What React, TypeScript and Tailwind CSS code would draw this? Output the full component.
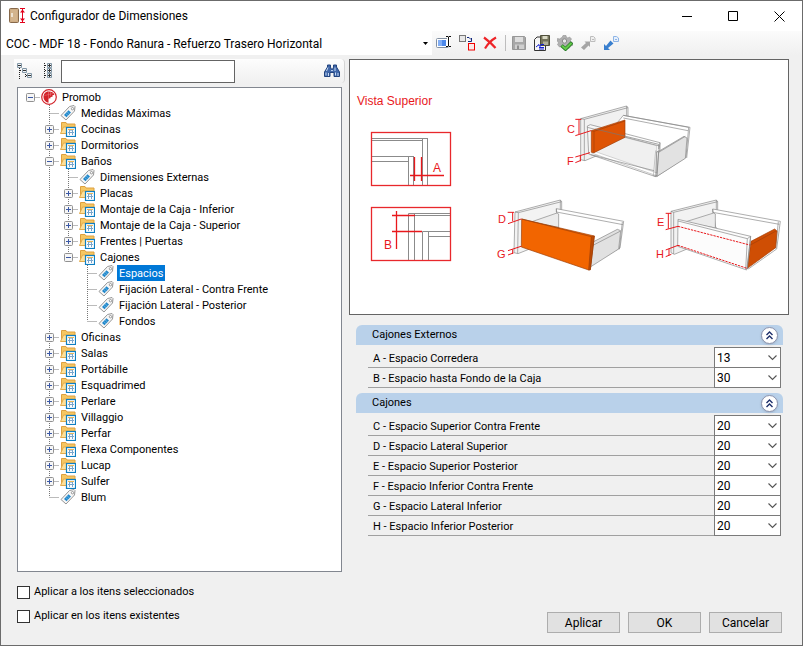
import React from "react";
import clsx from "clsx";

type TreeItem = {
  label: string;
  icon?: "root" | "folder" | "tag";
  selected?: boolean;
  closed?: boolean;
  items?: TreeItem[];
};

const folder = (label: string, items?: TreeItem[]): TreeItem => ({
  label,
  icon: "folder",
  closed: !items,
  items,
});
const tag = (label: string, selected = false): TreeItem => ({
  label,
  icon: "tag",
  selected,
});

const tree: TreeItem = {
  label: "Promob",
  icon: "root",
  items: [
    tag("Medidas Máximas"),
    folder("Cocinas"),
    folder("Dormitorios"),
    folder("Baños", [
      tag("Dimensiones Externas"),
      folder("Placas"),
      folder("Montaje de la Caja - Inferior"),
      folder("Montaje de la Caja - Superior"),
      folder("Frentes | Puertas"),
      folder("Cajones", [
        tag("Espacios", true),
        tag("Fijación Lateral - Contra Frente"),
        tag("Fijación Lateral - Posterior"),
        tag("Fondos"),
      ]),
    ]),
    folder("Oficinas"),
    folder("Salas"),
    folder("Portábille"),
    folder("Esquadrimed"),
    folder("Perlare"),
    folder("Villaggio"),
    folder("Perfar"),
    folder("Flexa Componentes"),
    folder("Lucap"),
    folder("Sulfer"),
    tag("Blum"),
  ],
};

const groups = [
  {
    title: "Cajones Externos",
    rows: [
      ["A - Espacio Corredera", "13"],
      ["B - Espacio hasta Fondo de la Caja", "30"],
    ],
  },
  {
    title: "Cajones",
    rows: [
      ["C - Espacio Superior Contra Frente", "20"],
      ["D - Espacio Lateral Superior", "20"],
      ["E - Espacio Superior Posterior", "20"],
      ["F - Espacio Inferior Contra Frente", "20"],
      ["G - Espacio Lateral Inferior", "20"],
      ["H - Espacio Inferior Posterior", "20"],
    ],
  },
];

/* ---------- Icons ---------- */

function Icon({ children }: { children: React.ReactNode }) {
  return (
    <svg className="size-4 shrink-0" viewBox="0 0 16 16" fill="none" aria-hidden="true">
      {children}
    </svg>
  );
}

function AppIcon() {
  return (
    <Icon>
      <rect x=".5" y=".5" width="9" height="14" rx="1" fill="#c9a67c" stroke="#86684a" />
      <path d="M1.5 1.5h7v12h-7z" fill="#d3b48d" />
      <path d="M3 5v4" stroke="#f7f3ea" strokeWidth="1.5" />
      <path d="M11 .5h5M11 14.5h5M13.5 1v13" stroke="#e2001a" />
      <path d="M11 4.5l2.5-3 2.5 3zM11 10.5l2.5 3 2.5-3z" fill="#e2001a" />
    </Icon>
  );
}

function RootIcon() {
  return (
    <Icon>
      <circle cx="8" cy="8" r="7.3" fill="#fff" stroke="#d2232a" strokeWidth="1.2" />
      <path
        d="M8 2.500C5 2 2.500 4.500 2.500 8c0 3 2.500 5.500 5 5.800L7.500 9.500l2-.2V8l2-.3V6.300l2-.5C12.500 3.500 10.500 2.500 8 2.500z"
        fill="#d2232a"
      />
      <path d="M7.500 3v6M3.500 6.500L12 4.500M9.500 3v4" stroke="#ee8085" strokeWidth=".5" />
    </Icon>
  );
}

function FolderIcon() {
  return (
    <Icon>
      <path d="M1.500 11.500V1.500h4.500l1 1.500h8v8.500z" fill="#f6c762" stroke="#dda040" />
      <path d="M.5 12.500L3.500 6H15l-1 6.500z" fill="#fee09a" stroke="#e2ab4c" />
      <rect x="6.500" y="6.500" width="9" height="9" fill="#fff" stroke="#0f7fc2" strokeWidth="1.200" />
      <path d="M8 11.500h6M9.500 8v6M12.500 8v6" stroke="#7aa6cc" />
      <path d="M8 8.500h6" stroke="#e9b75a" />
      <path d="M10 9.500h2" stroke="#a8c8e4" />
    </Icon>
  );
}

function TagIcon() {
  return (
    <Icon>
      <path d="M9.500 1.500L14 .5l1 1-.5 4.500L6 15 1 10.500z" fill="#f6f6f6" stroke="#969696" />
      <circle cx="12.500" cy="3.700" r="1.200" fill="#fff" stroke="#777" strokeWidth=".7" />
      <path d="M8.500 5.300l2.500 2.200-4.500 4.700L4 10z" fill="#2187ca" />
      <path d="M7 6.800l2.500 2.200M5.500 8.400L8 10.600" stroke="#8ccbf0" strokeWidth=".6" />
    </Icon>
  );
}

function CollapseIcon() {
  return (
    <Icon>
      <path d="M2.500 5v11M3 7.500h3M8.500 9v6M9 12.500h2" stroke="#222" strokeDasharray="1 1" />
      <path d="M.5 .5h4v4h-4zM5.500 5.500h4v4h-4zM10.500 10.500h4v4h-4z" fill="#eef2f5" stroke="#8296a5" />
      <path d="M1 2.500h3M6 7.500h3M11 12.500h3" stroke="#333" />
    </Icon>
  );
}

function ExpandIcon() {
  return (
    <Icon>
      <path d="M4.500 0v16M5 2.500h3M5 7.500h3M5 12.500h3" stroke="#222" strokeDasharray="1 1" />
      <path d="M7.500 .5h4v4h-4zM7.500 5.500h4v4h-4zM7.500 10.500h4v4h-4z" fill="#eef2f5" stroke="#8296a5" />
      <path d="M8 2.500h3M9.500 1v3M8 7.500h3M9.500 6v3M8 12.500h3M9.500 11v3" stroke="#333" />
    </Icon>
  );
}

function BinocularsIcon() {
  return (
    <Icon>
      <path d="M3.500 2h3v2L7 6h2l.5-2V2h3v2l3 5v4.500h-5.500V9.500H6v4H.5V9l3-5z" fill="#3f66a8" stroke="#21437e" />
      <path d="M2 9.500v3M4 4.500L2.500 8M11.500 9.500v3M11 4.500V8M4.500 10v3M14 10v3" stroke="#c6daf5" />
      <path d="M7 7.500h2" stroke="#b5cbea" />
    </Icon>
  );
}

function RenameIcon() {
  return (
    <Icon>
      <rect x=".5" y="3.500" width="12" height="9" rx="1" fill="#fff" stroke="#8290a3" />
      <path d="M2 5h8v6H2z" fill="#4c88ea" />
      <path d="M2 5h4v6H2z" fill="#82aef4" />
      <path d="M12.500 2v10" stroke="#fff" strokeWidth="3" />
      <path d="M10 1.500h2l.5.5.5-.5h2M12.500 2v9M10 11.500h2l.5-.5.5.5h2" stroke="#111" />
    </Icon>
  );
}

function ReplaceIcon() {
  return (
    <Icon>
      <rect x=".5" y=".5" width="6" height="6" fill="#e8e8e8" stroke="#777" />
      <path d="M8 2.500h2l2 2M12.500 3v3.500H9" stroke="#12277c" />
      <rect x="9.500" y="8.500" width="6" height="6.500" fill="#fbe9e9" stroke="#f00000" />
    </Icon>
  );
}

function DeleteIcon() {
  return (
    <Icon>
      <path d="M2 2.500c4 3 8 6.500 11.500 10.500M14 2.500C9.500 5 6 8.500 3 13.500" stroke="#ee2428" strokeWidth="2.200" />
    </Icon>
  );
}

function SaveIcon() {
  return (
    <Icon>
      <path d="M1.500 1.500h12l1 1v12h-13z" fill="#a8a8a8" stroke="#979797" />
      <path d="M4 2h8v5H4z" fill="#dedede" />
      <path d="M4 9.500h9V14H4z" fill="#cfcfcf" />
      <path d="M6 10.500h2V14H6z" fill="#8f8f8f" />
    </Icon>
  );
}

function SaveAsIcon() {
  return (
    <Icon>
      <path d="M.5 4.500L3 2h8.500v13.500H.5z" fill="#f5f5f5" stroke="#333" />
      <path d="M6.500.5h9v10h-9z" fill="#74735a" stroke="#4f4f3a" />
      <path d="M8.500 1h5v3h-5z" fill="#d9d9c4" />
      <path d="M9 6.500h5V10H9z" fill="#b0b09b" />
      <path d="M2 12l3-2.500V11h2V9.500h3M5 14h5M5 12.500h5" stroke="#1420d2" />
    </Icon>
  );
}

function ApplyIcon() {
  return (
    <Icon>
      <path
        d="M6 .5h3l.5 2 1.500.5L12.500 2l2 2-1 1.500.5 1.500 1.500.5v3l-2 .5-1 2-2 1L8 14l-2-.5L5.500 12 4 11.500l-1.500.5-2-2.500 1-1.500L1 6.500l-1-.5.5-2.500 2 .5L4 3l1-.5z"
        fill="#b0b0b0"
        stroke="#929292"
        strokeWidth=".6"
      />
      <circle cx="7.500" cy="6" r="2.200" fill="#e9e9e9" stroke="#888" />
      <path d="M4.500 10.500l4 3.500L15 7.500" stroke="#227b22" strokeWidth="3.600" />
      <path d="M5 10.800l3.500 3L14.500 8" stroke="#65c94b" strokeWidth="2" />
    </Icon>
  );
}

function ArrowUpIcon() {
  return (
    <Icon>
      <path d="M1 12.500L6 8 4.500 6.500h5.500V12L8.500 10.500 4 15z" fill="#a5a5a5" />
      <path d="M10.500 1.500h3l1.500 1.500v3.500h-4.500z" fill="#efefef" stroke="#bdbdbd" />
      <path d="M12 4.500h2" stroke="#bdbdbd" />
    </Icon>
  );
}

function ArrowDownIcon() {
  return (
    <Icon>
      <path d="M1 9v6h6l-2-2 5.500-4.500-3-3L3 11z" fill="#397fce" />
      <path d="M10.500 1.500h3l2 1.500v3.500h-5z" fill="#e7f0fc" stroke="#8db4e6" />
      <path d="M12 4.500h2" stroke="#8db4e6" />
    </Icon>
  );
}

/* ---------- Tree ---------- */

// One 19px column of the dotted connector lines
function Guide({ d }: { d: string }) {
  return (
    <svg className="h-4 w-[19px] shrink-0" viewBox="0 0 19 16" aria-hidden="true">
      <path d={d} fill="none" stroke="#777" strokeDasharray="1 1" />
    </svg>
  );
}

function Expander({ item, d }: { item: TreeItem; d: string }) {
  return (
    <button type="button" className="shrink-0" aria-label={item.label} aria-expanded={!item.closed}>
      <svg className="h-4 w-[19px]" viewBox="0 0 19 16">
        <path d={d} fill="none" stroke="#777" strokeDasharray="1 1" />
        <rect x="5.500" y="4.500" width="8" height="8" rx="1" fill="#f6f6f6" stroke="#919191" />
        <path d={item.closed ? "M7 8.500h5M9.500 6v5" : "M7 8.500h5"} stroke="#3b58a5" />
      </svg>
    </button>
  );
}

function TreeNode({ item, guides, last }: { item: TreeItem; guides: boolean[]; last: boolean }) {
  const isRoot = item.icon === "root";
  let d = "M9.500 8.500H19";
  if (!isRoot) d += last ? "M9.500 0V8" : "M9.500 0V16";

  return (
    <li>
      <div className="flex h-4 items-center">
        {guides.map((on, i) => (
          <Guide key={i} d={on ? "M9.500 0V16" : ""} />
        ))}
        {item.items || item.closed ? <Expander item={item} d={d} /> : <Guide d={d} />}
        <span className="ml-px mr-[3px] flex">
          {isRoot && <RootIcon />}
          {item.icon === "folder" && <FolderIcon />}
          {item.icon === "tag" && <TagIcon />}
        </span>
        <span
          className={clsx(
            "h-4 px-0.5 text-[11px] leading-[18px] whitespace-nowrap",
            item.selected && "bg-[#0078d7] text-white"
          )}
        >
          {item.label}
        </span>
      </div>
      {item.items && (
        <ul>
          {item.items.map((child, i) => (
            <TreeNode
              key={child.label}
              item={child}
              guides={isRoot ? [false] : [...guides, !last]}
              last={i === item.items!.length - 1}
            />
          ))}
        </ul>
      )}
    </li>
  );
}

/* ---------- Preview drawing ---------- */

function Preview() {
  return (
    <svg viewBox="350 60 438 254" className="block w-full" fill="none" role="img" aria-label="Vista Superior">
      <g fill="#e8181c" fontFamily="'Liberation Sans', Arial, sans-serif" fontSize="11">
        <text x="357" y="105" fontSize="12">Vista Superior</text>
        <text x="433" y="172" fontSize="12">A</text>
        <text x="384" y="249" fontSize="12">B</text>
        <text x="567" y="133">C</text>
        <text x="567" y="165">F</text>
        <text x="498" y="223">D</text>
        <text x="497" y="258">G</text>
        <text x="657" y="226">E</text>
        <text x="656" y="258">H</text>
      </g>

      {/* A */}
      <path d="M372 138.500h56M372 140.500h50.500M422.500 138v47M427.500 138v47M372 156.500h42M372 161.500h36M408.500 156v29M413.500 156v29" stroke="#8b8b8b" />
      <path d="M414.500 157v24M421.500 157v24M410 175.500h34" stroke="#e8181c" strokeWidth="1.300" />
      <rect x="371.500" y="132.500" width="79" height="53" stroke="#e8282c" strokeWidth="1.300" />

      {/* B */}
      <path d="M451 213.500h-42.500V260M451 215.500h-37M414.500 213v47M451 231.500h-28.500V260M428.500 231v29M428 236.500h23" stroke="#8b8b8b" />
      <path d="M392 215.500h23M392 231.500h30M396.500 211v38" stroke="#e8181c" strokeWidth="1.300" />
      <rect x="371.500" y="207.500" width="79" height="53" stroke="#e8282c" strokeWidth="1.300" />

      {/* C / F */}
      <g transform="translate(560 90) scale(.33333)" stroke="#858585" strokeWidth="2" strokeLinejoin="round">
        <path d="M62 86L200 48v112L75 212l-13-3z" fill="#f1f1f1" />
        <path d="M62 86l11 2v124M73 88L204 53v28M200 48l4 5" />
        <path d="M190 76L386 112l-8 90-86 56L97 190z" fill="#fff" />
        <path d="M190 76l10 2 190 34-10 92M190 84l194 38" />
        <path d="M104 184l89-42 97 25 1 82z" fill="#e9e9e9" stroke="#9c9c9c" />
        <path d="M296 184l76-45 9 5-5 61-85 54z" fill="#e2e2e2" />
        <path d="M287 182l9 5 80-48M296 187l-6 73M287 182l-7 75" />
        <path d="M82 108l9-4 209 54v24l-10 4-3 74L86 192z" fill="#fff" fillOpacity=".35" />
        <path d="M82 112l216 56M92 194l190 48M300 158l-4 26M280 257l10 3" />
        <path d="M94 122l101-32v52L102 188l-8-1z" fill="#de5405" stroke="#a13e09" />
        <path d="M102 124v64M94 122l8 2 93-31" stroke="#a13e09" />
        <path d="M106 117l190 46v14" stroke="#777" />
        <path d="M46 88h18M57 88v44M46 137l47-15M46 201l44-13M61 198v16M46 218l17-7" stroke="#e8181c" strokeWidth="3" />
      </g>

      {/* D / G */}
      <g transform="translate(485 190) scale(.33333)" stroke="#858585" strokeWidth="2" strokeLinejoin="round">
        <path d="M90 66L226 30v110L99 191l-12-3z" fill="#f3f3f3" />
        <path d="M90 66l10 2-2 122M100 68l130-33v25M226 30l4 5" />
        <path d="M214 56l202 38-11 80-85 48-100-98z" fill="#fff" />
        <path d="M214 56v10l200 38M412 96l-9 82" />
        <path d="M138 96l78-27 5 3v40z" fill="#ececec" />
        <path d="M324 156l73-38 10 4-6 55-85 54z" fill="#e1e1e1" />
        <path d="M324 166l81-42" />
        <path d="M110 87l218 51-12 101-5 1L109 171z" fill="#f26500" stroke="#9b3e08" />
        <path d="M319 140l9-2-12 101-5 1z" fill="#bd4a04" stroke="#9b3e08" />
        <path d="M110 87l209 53" stroke="#9b3e08" />
        <path d="M68 67h19M83 67v27M69 101l40-14M69 182l39-13M83 178v14M69 195l16-6" stroke="#e8181c" strokeWidth="3" />
      </g>

      {/* E / H */}
      <g transform="translate(645 190) scale(.33333)" stroke="#858585" strokeWidth="2" strokeLinejoin="round">
        <path d="M78 64L214 30v110L88 193l-10-5z" fill="#f2f2f2" />
        <path d="M78 64l8 3v125M86 67l132-32v28M214 30l4 5" />
        <path d="M203 57l203 37-11 83-85 60-98-126z" fill="#fff" />
        <path d="M203 57v10l200 36M400 95l-8 80" />
        <path d="M120 96l86-27 5 3v42z" fill="#ececec" />
        <path d="M318 154l71-37 7 6-4 50-85 62z" fill="#cf4e04" stroke="#a13e09" />
        <path d="M316 165l77-42" stroke="#a13e09" />
        <path d="M99 88l218 51-12 101L98 169z" fill="#fcfcfc" />
        <path d="M99 93l208 53-5 92M317 139l-10 7M317 139l-10 98" />
        <path d="M62 70h17M70 70v46M62 119l37-10M62 180l37-14M72 176v20M62 200l17-7" stroke="#e8181c" strokeWidth="3" />
        <path d="M99 109l215 56M99 166l207 69" stroke="#e8181c" strokeWidth="3" strokeDasharray="7 3" />
      </g>
    </svg>
  );
}

/* ---------- Controls ---------- */

function ToolButton({ label, children }: { label: string; children: React.ReactNode }) {
  return (
    <button type="button" aria-label={label} className="flex">
      {children}
    </button>
  );
}

function PushButton({ label }: { label: string }) {
  return (
    <button type="button" className="h-[21px] w-[73px] border border-[#adadad] bg-[#e1e1e1] text-[12px] leading-[18px]">
      {label}
    </button>
  );
}

function ParamRow({ label, value }: { label: string; value: string }) {
  const id = label.charAt(0);
  return (
    <div className="flex">
      <label htmlFor={id} className="h-5 flex-1 border-b border-[#a0a0a0] pl-[5px] text-[11px] leading-[22px]">
        {label}
      </label>
      <div className="relative -mt-px w-[67px]">
        <select
          id={id}
          defaultValue={value}
          className="block h-[21px] w-full appearance-none border border-[#7a7a7a] bg-white pl-0.5 text-[12px] leading-[18px]"
        >
          <option>{value}</option>
        </select>
        <svg className="pointer-events-none absolute top-1.5 right-1 h-2 w-[9px]" viewBox="0 0 9 8" fill="none">
          <path d="M.5 2.500l4 4 4-4" stroke="#555" strokeWidth="1.100" />
        </svg>
      </div>
    </div>
  );
}

function ParamGroup({ title, rows }: { title: string; rows: string[][] }) {
  return (
    <section className="mr-1.5 ml-[7px]">
      <header className="flex h-5 items-center justify-between rounded-t-md bg-[#b9d1ea] pr-[5px] pl-4">
        <h2 className="text-[11px] leading-[22px]">{title}</h2>
        <button
          type="button"
          aria-label={title}
          className="flex size-[17px] items-center justify-center rounded-full border border-[#8c93ad] bg-white shadow-sm"
        >
          <svg className="size-[9px]" viewBox="0 0 9 9" fill="none">
            <path d="M1.500 4l3-3 3 3M1.500 8l3-3 3 3" stroke="#1e2f6b" strokeWidth="1.400" />
          </svg>
        </button>
      </header>
      <div className="mt-[3px] mr-0.5 ml-3">
        {rows.map(([label, value]) => (
          <ParamRow key={label} label={label} value={value} />
        ))}
      </div>
    </section>
  );
}

export default function App() {
  return (
    <div className="flex min-h-screen flex-col border border-[#6b6b6b] bg-[#f0f0f0] font-['Roboto',sans-serif] text-black">
      {/* Title bar */}
      <div className="flex h-[30px] items-center bg-white pl-2">
        <AppIcon />
        <h1 className="ml-[5px] flex-1 text-[12px] leading-4">Configurador de Dimensiones</h1>
        <button type="button" aria-label="Minimizar" className="flex h-full w-[46px] items-center justify-center">
          <svg className="size-[11px]" viewBox="0 0 11 11"><path d="M0 5.500h10" stroke="#000" /></svg>
        </button>
        <button type="button" aria-label="Maximizar" className="flex h-full w-[46px] items-center justify-center">
          <svg className="size-[11px]" viewBox="0 0 11 11"><path d="M.5 .5h9v9h-9z" fill="none" stroke="#000" /></svg>
        </button>
        <button type="button" aria-label="Cerrar" className="flex h-full w-[46px] items-center justify-center">
          <svg className="size-[11px]" viewBox="0 0 11 11"><path d="M.5 .5l10 10M10.500 .5l-10 10" stroke="#000" /></svg>
        </button>
      </div>

      {/* Toolbar */}
      <div className="flex h-6 items-center bg-linear-to-b from-[#fbfbfb] to-[#f0f0f0]">
        <div className="relative h-full w-[431px] bg-white">
          <select aria-label="Configuración" className="h-full w-full appearance-none pl-[5px] text-[12px] leading-6">
            <option>COC - MDF 18 - Fondo Ranura - Refuerzo Trasero Horizontal</option>
          </select>
          <svg className="pointer-events-none absolute top-[11px] right-1 h-[3px] w-[5px]" viewBox="0 0 5 3">
            <path d="M0 0h5L2.500 3z" fill="#000" />
          </svg>
        </div>
        <div className="ml-1 flex items-center gap-[7px]">
          <ToolButton label="Renombrar"><RenameIcon /></ToolButton>
          <ToolButton label="Reemplazar"><ReplaceIcon /></ToolButton>
          <ToolButton label="Eliminar"><DeleteIcon /></ToolButton>
        </div>
        <div className="mr-[5px] ml-[7px] h-4 w-px bg-[#bdbdbd]" />
        <div className="flex items-center gap-[7px]">
          <ToolButton label="Guardar"><SaveIcon /></ToolButton>
          <ToolButton label="Guardar como"><SaveAsIcon /></ToolButton>
          <ToolButton label="Validar"><ApplyIcon /></ToolButton>
          <ToolButton label="Exportar"><ArrowUpIcon /></ToolButton>
          <ToolButton label="Importar"><ArrowDownIcon /></ToolButton>
        </div>
      </div>

      <div className="flex flex-1 gap-1 pt-1 pr-[13px] pl-[13px]">
        <div className="flex w-[331px] shrink-0 flex-col gap-1">
          <div className="flex h-6 items-center rounded-r-sm border-r border-[#d5d5d5] bg-linear-to-b from-[#fdfdfd] to-[#f0f0f0] pr-1 pl-[3px]">
            <ToolButton label="Contraer todo"><CollapseIcon /></ToolButton>
            <span className="ml-[7px] flex">
              <ToolButton label="Expandir todo"><ExpandIcon /></ToolButton>
            </span>
            <input
              type="text"
              aria-label="Buscar"
              className="ml-[5px] h-[23px] w-[174px] border border-[#646464] bg-white px-1 text-[12px]"
            />
            <span className="ml-auto flex">
              <ToolButton label="Buscar"><BinocularsIcon /></ToolButton>
            </span>
          </div>
          <ul className="mr-[3px] ml-[3px] flex-1 border border-[#828790] bg-white pt-px pl-[3px]">
            <TreeNode item={tree} guides={[]} last />
          </ul>
        </div>

        <div className="min-w-0 flex-1">
          <div className="border border-[#646464] bg-white">
            <Preview />
          </div>
          <div className="mt-2.5 flex flex-col gap-[5px]">
            {groups.map((group) => (
              <ParamGroup key={group.title} {...group} />
            ))}
          </div>
        </div>
      </div>

      {/* Footer */}
      <div className="flex items-end justify-between pr-5 pb-3 pl-4">
        <div className="flex flex-col pt-2 pb-[5px] text-[11px]">
          {["Aplicar a los itens seleccionados", "Aplicar en los itens existentes"].map((label) => (
            <label key={label} className="flex h-6 items-center gap-1 leading-[18px]">
              <input type="checkbox" className="size-[13px] appearance-none border border-[#333] bg-white" />
              {label}
            </label>
          ))}
        </div>
        <div className="flex gap-2">
          <PushButton label="Aplicar" />
          <PushButton label="OK" />
          <PushButton label="Cancelar" />
        </div>
      </div>
    </div>
  );
}
